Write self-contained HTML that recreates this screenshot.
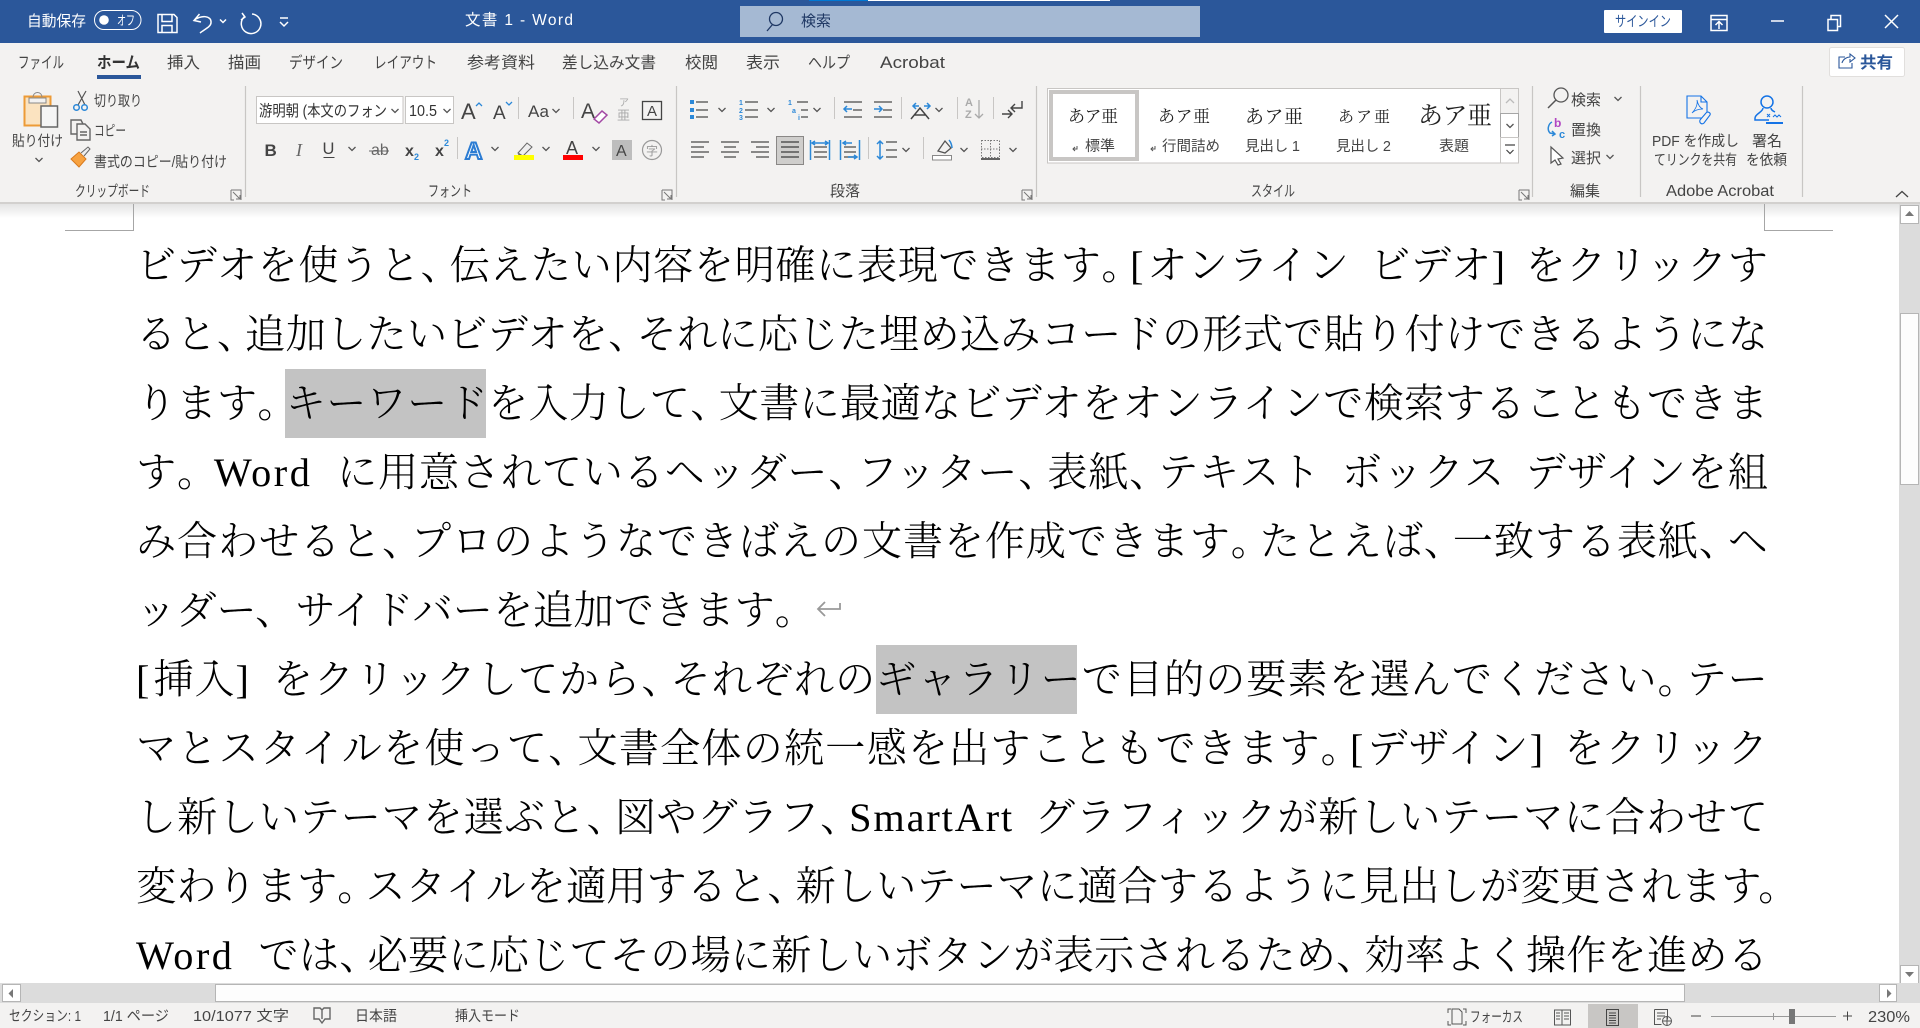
<!DOCTYPE html>
<html lang="ja"><head><meta charset="utf-8"><title>文書 1 - Word</title>
<style>
html,body{margin:0;padding:0;width:1920px;height:1028px;overflow:hidden;background:#fff}
#d{position:absolute;left:0;top:0;width:1920px;height:983px;overflow:hidden;background:#fff}
.l{position:absolute;left:136px;width:1632px;height:69px;line-height:69px;font-size:40.25px;font-weight:300;color:#000;font-family:"Liberation Serif","Noto Serif CJK JP",serif;text-align:justify;text-align-last:justify;white-space:nowrap}
.p{letter-spacing:-12px}
.q{letter-spacing:-4px}
.s{display:inline-block;width:20px}
.t{display:inline-block;width:24px}
.wd{letter-spacing:2.5px}
.sa{letter-spacing:1.9px}
.br{letter-spacing:3px}
.h{position:absolute;background:#c3c3c3;height:69px}
svg{position:absolute;left:0;top:0}
svg text{font-family:"Liberation Sans","Noto Sans CJK JP",sans-serif;fill:#444;font-size:14px}
.k{stroke:#666;fill:none;stroke-width:1.4}
.w{stroke:#fff;fill:none;stroke-width:1.5}
.b{stroke:#2b88d8;fill:none;stroke-width:1.5}
</style></head><body>
<div id="d">
<div class="h" style="left:285px;top:369px;width:201px"></div>
<div class="h" style="left:876px;top:645px;width:201px"></div>
<div class="l" style="top:231px">ビデオを使うと<span class="p">、</span>伝えたい内容を明確に表現できます<span class="p">。</span><span class="br">[</span>オンライン<span class="s"></span>ビデオ]<span class="s"></span>をクリックす</div>
<div class="l" style="top:300px">ると<span class="p">、</span>追加したいビデオを<span class="p">、</span>それに応じた埋め込みコードの形式で貼り付けできるようにな</div>
<div class="l" style="top:369px">ります<span class="p">。</span>キーワードを入力して<span class="p">、</span>文書に最適なビデオをオンラインで検索することもできま</div>
<div class="l" style="top:438px">す<span class="q">。</span><span class="wd">Word</span><span class="t"></span>に用意されているヘッダー<span class="p">、</span>フッター<span class="p">、</span>表紙<span class="p">、</span>テキスト<span class="s"></span>ボックス<span class="s"></span>デザインを組</div>
<div class="l" style="top:507px">み合わせると<span class="p">、</span>プロのようなできばえの文書を作成できます<span class="p">。</span>たとえば<span class="p">、</span>一致する表紙<span class="p">、</span>ヘ</div>
<div class="l" style="top:576px;text-align:left;text-align-last:left">ッダー、サイドバーを追加できます<span class="p">。</span></div>
<div class="l" style="top:645px"><span class="br">[</span>挿入<span class="br">]</span><span class="s"></span>をクリックしてから<span class="p">、</span>それぞれのギャラリーで目的の要素を選んでください<span class="p">。</span>テー</div>
<div class="l" style="top:714px">マとスタイルを使って<span class="p">、</span>文書全体の統一感を出すこともできます<span class="p">。</span><span class="br">[</span>デザイン]<span class="s"></span>をクリック</div>
<div class="l" style="top:783px">し新しいテーマを選ぶと<span class="p">、</span>図やグラフ<span class="p">、</span><span class="sa">SmartArt</span><span class="s"></span>グラフィックが新しいテーマに合わせて</div>
<div class="l" style="top:852px;width:1644px">変わります<span class="p">。</span>スタイルを適用すると<span class="p">、</span>新しいテーマに適合するように見出しが変更されます。</div>
<div class="l" style="top:921px"><span class="wd">Word</span><span class="t"></span>では<span class="p">、</span>必要に応じてその場に新しいボタンが表示されるため<span class="p">、</span>効率よく操作を進める</div>
</div>
<svg width="1920" height="1028" viewBox="0 0 1920 1028">
<defs>
<path id="c" d="M-3.5-2L0 1.5L3.5-2" fill="none" stroke="#555" stroke-width="1.3"/>
<path id="dl" d="M0 0h10v10M2 2l7 7M5 9h4V5M0 0v10h3" fill="none" stroke="#777" stroke-width="1"/>
<linearGradient id="sh" x1="0" y1="0" x2="0" y2="1"><stop offset="0" stop-color="#e4e4e4"/><stop offset="1" stop-color="#fff"/></linearGradient>
</defs>
<!-- title bar -->
<rect width="1920" height="43" fill="#2b579a"/>
<rect x="809" y="0" width="59" height="1" fill="#0078d4"/><rect x="868" y="0" width="242" height="1" fill="#fff"/>
<rect x="740" y="6" width="460" height="31" fill="#a5b9d3"/>
<g style="fill:#fff">
<text x="27" y="26" textLength="59" lengthAdjust="spacingAndGlyphs" style="fill:#fff;font-size:15px">自動保存</text>
<rect x="94.500" y="10.500" width="46.500" height="19" rx="9.500" fill="none" stroke="#fff"/><circle cx="104" cy="20" r="4.800" fill="#fff"/>
<text x="117" y="25" textLength="18" lengthAdjust="spacingAndGlyphs" style="fill:#fff;font-size:13px">オフ</text>
<path class="w" d="M158 14.500h16l3 3v15h-19zM162 14.500v7h10v-7M162 32.500v-7h10v7"/>
<path class="w" d="M199.500 14L194 20.500l7 1.500M194 20.500C200 15 212 15 211 23C210.500 27 205 29 200 33"/>
<path d="M220 19.500l3 3 3-3" class="w" stroke-width="1"/>
<path class="w" d="M252 14A9.800 9.800 0 1 1 244 17M242 13l3 4-4 3"/>
<path d="M280 18h8M280 22l4 4 4-4" class="w" stroke-width="1.100"/>
<text x="465" y="25" textLength="108" lengthAdjust="spacing" style="fill:#fff;font-size:15.500px">文書 1 - Word</text>
<path d="M767 31l5.500-6.500" stroke="#1f3864" stroke-width="1.300" fill="none"/><circle cx="776" cy="19" r="6.500" fill="none" stroke="#1f3864" stroke-width="1.300"/>
<text x="801" y="26" textLength="30" lengthAdjust="spacingAndGlyphs" style="fill:#1f3864;font-size:15px">検索</text>
<rect x="1604" y="10" width="78" height="23" rx="1" fill="#fff"/>
<text x="1615" y="26.500" textLength="56" lengthAdjust="spacingAndGlyphs" style="fill:#2b579a;font-size:14.500px">サインイン</text>
<path class="w" stroke-width="1.300" d="M1711 15.500h16v15h-16zM1711 19.500h16M1719 29v-7M1715.500 25l3.500-3.500 3.500 3.500"/>
<path class="w" stroke-width="1.300" d="M1771 21h13"/>
<path class="w" stroke-width="1.200" d="M1828 19.500h9.500v11h-9.500zM1831 19v-3.500h9.500v11h-3"/>
<path class="w" stroke-width="1.300" d="M1885 15l13 13M1898 15l-13 13"/>
</g>
<!-- ribbon -->
<rect y="43" width="1920" height="159" fill="#f3f2f1"/>
<rect y="202" width="1920" height="2" fill="#d2d0ce"/>
<rect y="204" width="1899" height="14" fill="url(#sh)"/>
<g>
<text x="18" y="68" textLength="46" lengthAdjust="spacingAndGlyphs" style="font-size:16px">ファイル</text>
<text x="97" y="68" textLength="43" lengthAdjust="spacingAndGlyphs" style="font-size:16px;font-weight:700;fill:#333">ホーム</text>
<rect x="97" y="75" width="44" height="4" fill="#2b579a"/>
<text x="167" y="68" textLength="33" lengthAdjust="spacingAndGlyphs" style="font-size:16px">挿入</text>
<text x="228" y="68" textLength="33" lengthAdjust="spacingAndGlyphs" style="font-size:16px">描画</text>
<text x="289" y="68" textLength="54" lengthAdjust="spacingAndGlyphs" style="font-size:16px">デザイン</text>
<text x="374" y="68" textLength="63" lengthAdjust="spacingAndGlyphs" style="font-size:16px">レイアウト</text>
<text x="467" y="68" textLength="68" lengthAdjust="spacingAndGlyphs" style="font-size:16px">参考資料</text>
<text x="562" y="68" textLength="94" lengthAdjust="spacingAndGlyphs" style="font-size:16px">差し込み文書</text>
<text x="685" y="68" textLength="33" lengthAdjust="spacingAndGlyphs" style="font-size:16px">校閲</text>
<text x="746" y="68" textLength="34" lengthAdjust="spacingAndGlyphs" style="font-size:16px">表示</text>
<text x="808" y="68" textLength="42" lengthAdjust="spacingAndGlyphs" style="font-size:16px">ヘルプ</text>
<text x="880" y="68" textLength="65" lengthAdjust="spacingAndGlyphs" style="font-size:17px">Acrobat</text>
</g>
<rect x="1829.500" y="47.500" width="75" height="29" rx="2" fill="#fff" stroke="#e1dfdd"/>
<path d="M1845 57h-6v11h13v-5M1842 63c1-4 5-6 8-6v-3l5 4-5 4v-3" fill="none" stroke="#2b579a" stroke-width="1.100"/>
<text x="1860" y="68" textLength="33" lengthAdjust="spacingAndGlyphs" style="font-size:16px;font-weight:700;fill:#2b579a">共有</text>
<path stroke="#c8c6c4" stroke-width="1.200" d="M245.500 86v111M676.500 86v111M1036.500 86v111M1532.500 86v111M1640.500 86v111M1802.500 86v111"/>
<g>
<text x="75" y="196" textLength="75" lengthAdjust="spacingAndGlyphs" style="font-size:15px">クリップボード</text>
<text x="428" y="196" textLength="44" lengthAdjust="spacingAndGlyphs" style="font-size:15px">フォント</text>
<text x="830" y="196" textLength="30" lengthAdjust="spacingAndGlyphs" style="font-size:15px">段落</text>
<text x="1251" y="196" textLength="44" lengthAdjust="spacingAndGlyphs" style="font-size:15px">スタイル</text>
<text x="1570" y="196" textLength="30" lengthAdjust="spacingAndGlyphs" style="font-size:15px">編集</text>
<text x="1666" y="196" textLength="108" lengthAdjust="spacingAndGlyphs" style="font-size:15.500px">Adobe Acrobat</text>
</g>
<use href="#dl" x="231" y="190"/><use href="#dl" x="662" y="190"/><use href="#dl" x="1022" y="190"/><use href="#dl" x="1519" y="190"/>
<path d="M1896 197l6-5.500 6 5.500" fill="none" stroke="#444" stroke-width="1.300"/>
<!-- clipboard -->
<path d="M24.500 96.500h26v29h-26z" fill="#fbe3c0" stroke="#ed9b36" stroke-width="2"/>
<rect x="29" y="98" width="17" height="5" fill="#f3f2f1" stroke="#888"/><path d="M33 97a4.500 4.500 0 0 1 9 0" fill="none" stroke="#888"/>
<rect x="41" y="106" width="16.500" height="21" fill="#f5f5f5" stroke="#666" stroke-width="1.500"/>
<text x="12" y="146" textLength="51" lengthAdjust="spacingAndGlyphs" style="font-size:14.500px">貼り付け</text>
<use href="#c" x="39" y="160"/>
<path d="M78 91l7 14M86 91l-8 14" stroke="#555" fill="none" stroke-width="1.200"/><circle cx="76.500" cy="107.500" r="2.800" fill="none" stroke="#2b88d8" stroke-width="1.500"/><circle cx="84.500" cy="107.500" r="2.800" fill="none" stroke="#2b88d8" stroke-width="1.500"/>
<text x="94" y="106" textLength="48" lengthAdjust="spacingAndGlyphs" style="font-size:14.500px">切り取り</text>
<path class="k" d="M77 134h-6v-14h10l2 4M77 124h8l5 5v11H77zM80 132h7M80 135h7"/>
<text x="94" y="136" textLength="32" lengthAdjust="spacingAndGlyphs" style="font-size:14.500px">コピー</text>
<path d="M71 159l8-7 7 7-7 8z" fill="#f7a240" stroke="#d97a1d"/><path d="M81 153l7-6 2 2-6 7" fill="#eee" stroke="#666"/>
<text x="94" y="167" textLength="133" lengthAdjust="spacingAndGlyphs" style="font-size:14.500px">書式のコピー/貼り付け</text>
<!-- font -->
<rect x="256.500" y="96.500" width="146.500" height="27" fill="#fff" stroke="#c8c6c4"/>
<rect x="405.500" y="96.500" width="48" height="27" fill="#fff" stroke="#c8c6c4"/>
<text x="259" y="116" textLength="128" lengthAdjust="spacingAndGlyphs" style="font-size:15.500px;fill:#333">游明朝 (本文のフォン</text>
<text x="409" y="116" textLength="28" lengthAdjust="spacingAndGlyphs" style="font-size:16px;fill:#333">10.5</text>
<use href="#c" x="395" y="111"/><use href="#c" x="447" y="111"/>
<text x="461" y="119" style="font-size:22px;fill:#444">A</text><path d="M476 106l3-3 3 3" stroke="#2b88d8" fill="none" stroke-width="1.300"/>
<text x="493" y="119" style="font-size:19px;fill:#444">A</text><path d="M506 102l3 3 3-3" stroke="#2b88d8" fill="none" stroke-width="1.300"/>
<path stroke="#c8c6c4" d="M518.500 97v22M573.500 97v22M457.500 137v22"/>
<text x="528" y="117" textLength="21" lengthAdjust="spacing" style="font-size:17px">Aa</text><use href="#c" x="556" y="111"/>
<text x="581" y="118" style="font-size:21px;fill:#444">A</text><path d="M594 119l8-8 5 4-8 8z" fill="#fff" stroke="#a349a4" stroke-width="1.500"/>
<text x="619" y="106" style="font-size:10px;fill:#aaa">ア</text><text x="617" y="120" style="font-size:13px;fill:#aaa">亜</text>
<rect x="642.500" y="101.500" width="19" height="18" fill="none" stroke="#444" stroke-width="1.300"/>
<text x="647" y="116" style="font-size:15px">A</text>
<text x="264.500" y="156" style="font-size:17px;font-weight:700">B</text>
<text x="296" y="156" style="font-size:18px;font-style:italic;fill:#666;font-family:'Liberation Serif'">I</text>
<text x="322.500" y="154" style="font-size:16.500px">U</text><path d="M323.500 157.500h11" stroke="#444"/><use href="#c" x="352" y="149"/>
<text x="371" y="155" style="font-size:16px;fill:#666">ab</text><path d="M369 151h20" stroke="#666"/>
<text x="405" y="156" style="font-size:16px;font-weight:700">x</text><text x="414" y="160" style="font-size:9px;fill:#2b88d8;font-weight:700">2</text>
<text x="435" y="156" style="font-size:16px;font-weight:700">x</text><text x="444" y="146" style="font-size:9px;fill:#2b88d8;font-weight:700">2</text>
<text x="465" y="159" style="font-size:24px;font-weight:700;fill:#fff;stroke:#2b7cd3;stroke-width:2">A</text><use href="#c" x="495" y="149"/>
<path d="M518 153l9-10 5 4-9 9z" fill="#eee" stroke="#666"/><path d="M517 157l2-4 4 3z" fill="#666"/><rect x="514" y="155" width="20" height="5" fill="#ff0"/><use href="#c" x="546" y="149"/>
<text x="566" y="154" style="font-size:18px">A</text><rect x="563" y="155" width="20" height="5" fill="#f00"/><use href="#c" x="596" y="149"/>
<rect x="612" y="140" width="20" height="20" fill="#bdbdbd"/><text x="616" y="156" style="font-size:16px">A</text>
<circle cx="652" cy="150" r="9.500" fill="none" stroke="#999" stroke-width="1.200"/><text x="646" y="155" style="font-size:12px;fill:#999">字</text>
<!-- para -->
<path class="k" d="M696 102h12M696 110h12M696 117h12M745 102h13M745 110h13M745 117h13M797 102h11M801 110h7M801 117h7M844 102h18M853 110h9M844 117h18M874 102h18M883 110h9M874 117h18"/>
<path fill="#2b88d8" d="M690 100h4v4h-4zM690 108h4v4h-4zM690 115h4v4h-4z"/>
<text x="739" y="105" style="font-size:7px;fill:#2b88d8;font-weight:700">1</text><text x="739" y="113" style="font-size:7px;fill:#2b88d8;font-weight:700">2</text><text x="739" y="120" style="font-size:7px;fill:#2b88d8;font-weight:700">3</text>
<text x="788" y="105" style="font-size:7px;fill:#2b88d8;font-weight:700">1</text><text x="792" y="113" style="font-size:7px;fill:#2b88d8;font-weight:700">a</text><text x="798" y="120" style="font-size:7px;fill:#2b88d8;font-weight:700">i</text>
<use href="#c" x="722" y="110"/><use href="#c" x="771" y="110"/><use href="#c" x="817" y="110"/><use href="#c" x="939" y="110"/>
<path class="b" d="M852 109h-8m3-3l-3 3 3 3M874 109h8m-3-3l3 3-3 3M913 106h6m-3-3l-3 3 3 3M924 106h6m-3-3l3 3-3 3"/>
<path d="M911 119l9-11 9 11M914 115h12" fill="none" stroke="#444" stroke-width="1.500"/>
<path stroke="#c8c6c4" d="M834.500 97v22M901.500 97v22M957.500 97v22M993.500 97v22M868.500 137v22M923.500 137v22"/>
<text x="965" y="106" style="font-size:11px;fill:#aaa;font-weight:700">A</text><text x="965" y="118" style="font-size:11px;fill:#aaa;font-weight:700">Z</text>
<path d="M979 100v18M975 114l4 4 4-4" fill="none" stroke="#aaa" stroke-width="1.300"/>
<path d="M1002 114h10M1008 110l4 4-4 4M1022 101v7h-11M1015 104l-4 4 4 4" fill="none" stroke="#444" stroke-width="1.400"/>
<path class="k" d="M691 142h18M691 147h13M691 152h18M691 157h13M721 142h18M724 147h12M721 152h18M724 157h12M751 142h18M756 147h13M751 152h18M756 157h13"/>
<rect x="776.500" y="136.500" width="27" height="28" fill="#cfcecc" stroke="#8a8886"/>
<path d="M781 142h18M781 147h18M781 152h18M781 157h18" stroke="#555" stroke-width="1.500"/>
<path class="k" d="M814 147h13M814 152h13M814 157h13M844 147h12M844 152h12M844 157h12"/>
<path class="b" d="M810.500 140v20M829.500 140v20M812 143h16m-3-2l3 2-3 2M815 141l-3 2 3 2M840.500 140v20M859.500 140v20M852 143h-9m3-2l-3 2 3 2M848 157h9m-3-2l3 2-3 2"/>
<path class="b" d="M880 141v18m-3-15l3-3 3 3M877 156l3 3 3-3"/>
<path class="k" d="M886 142h11M886 150h11M886 157h11"/>
<use href="#c" x="906" y="150"/>
<path d="M938 151l7-10 6 7-6 5z" fill="none" stroke="#555" stroke-width="1.300"/><path d="M949 140c2 2 3 6 3 8" stroke="#2b88d8" fill="none" stroke-width="1.500"/>
<rect x="932.500" y="155.500" width="19" height="4.500" fill="#fff" stroke="#888"/><use href="#c" x="964" y="150"/>
<rect x="981.500" y="140.500" width="18" height="17" fill="none" stroke="#777" stroke-dasharray="1.500 1.500"/><path d="M990.500 140v18M981 149h19" stroke="#777" stroke-dasharray="1.500 1.500"/><path d="M981 159h19" stroke="#333" stroke-width="1.500"/>
<use href="#c" x="1013" y="150"/>
<!-- styles -->
<rect x="1047.500" y="88.500" width="471" height="74.500" fill="#fff" stroke="#c8c6c4"/>
<rect x="1051" y="92" width="86" height="67" fill="none" stroke="#c8c6c4" stroke-width="4"/>
<rect x="1500.500" y="88.500" width="18" height="25" fill="#f3f2f1" stroke="#c8c6c4"/>
<rect x="1500.500" y="113.500" width="18" height="24" fill="#fff" stroke="#a6a6a6"/>
<rect x="1500.500" y="137.500" width="18" height="25.500" fill="#fff" stroke="#c8c6c4"/>
<path d="M1506 103l4-4 4 4" fill="none" stroke="#bbb" stroke-width="1.300"/>
<use href="#c" x="1510" y="126"/>
<path d="M1505 145h10M1506.500 150l3.500 3.500 3.500-3.500" fill="none" stroke="#444" stroke-width="1.200"/>
<g>
<text x="1068" y="122" textLength="50" lengthAdjust="spacing" style="font-size:17px;fill:#222;font-family:'Noto Serif CJK JP',serif">あア亜</text>
<text x="1158" y="122" textLength="52" lengthAdjust="spacing" style="font-size:17px;fill:#222;font-family:'Noto Serif CJK JP',serif">あア亜</text>
<text x="1245" y="123" textLength="58" lengthAdjust="spacing" style="font-size:19px;fill:#222;font-family:'Noto Serif CJK JP',serif">あア亜</text>
<text x="1338" y="122" textLength="52" lengthAdjust="spacing" style="font-size:16px;fill:#222;font-family:'Noto Serif CJK JP',serif">あア亜</text>
<text x="1418" y="124" textLength="74" lengthAdjust="spacing" style="font-size:25px;fill:#222;font-family:'Noto Serif CJK JP',serif">あア亜</text>
</g>
<path d="M1077 146v3h-4m2-2l-2 2 2 2M1155 146v3h-4m2-2l-2 2 2 2" fill="none" stroke="#555"/>
<text x="1085" y="151" textLength="30" lengthAdjust="spacingAndGlyphs" style="font-size:14.500px">標準</text>
<text x="1162" y="151" textLength="58" lengthAdjust="spacingAndGlyphs" style="font-size:14.500px">行間詰め</text>
<text x="1245" y="151" textLength="55" lengthAdjust="spacing" style="font-size:14.500px">見出し 1</text>
<text x="1336" y="151" textLength="55" lengthAdjust="spacing" style="font-size:14.500px">見出し 2</text>
<text x="1439" y="151" textLength="30" lengthAdjust="spacingAndGlyphs" style="font-size:14.500px">表題</text>
<!-- editing -->
<circle cx="1561" cy="95" r="7" fill="none" stroke="#555" stroke-width="1.300"/><path d="M1548 108l8-8" stroke="#555" stroke-width="1.500"/>
<text x="1571" y="105" textLength="30" lengthAdjust="spacingAndGlyphs" style="font-size:15px">検索</text><use href="#c" x="1618" y="99"/>
<text x="1554" y="127" style="font-size:12px;fill:#b146c2;font-weight:700">b</text><text x="1559" y="138" style="font-size:11px;fill:#2b88d8;font-weight:700">c</text>
<path class="b" d="M1552 122c-4 2-5 8-2 11l5 1m-3-3l3 3-3 2"/>
<text x="1571" y="135" textLength="30" lengthAdjust="spacingAndGlyphs" style="font-size:15px">置換</text>
<path d="M1551 147l0 16 4-3 3 5 3-1-3-5 5-1z" fill="#fff" stroke="#555" stroke-width="1.200"/>
<text x="1571" y="163" textLength="30" lengthAdjust="spacingAndGlyphs" style="font-size:15px">選択</text><use href="#c" x="1610" y="157"/>
<!-- acrobat -->
<path d="M1687 96h14l6 6v16h-20zM1701 96v6h6" fill="none" stroke="#1473e6" stroke-width="1.100"/><path d="M1692 113c3-3 6-8 5-13 1 5 3 8 6 9-4 0-8 1-11 4z" fill="none" stroke="#1473e6" stroke-width=".8"/>
<path d="M1700 120l6-7c2-2 5 0 4 2l-6 8c-2 2-5 0-4-3z" fill="#f3f2f1" stroke="#1473e6" stroke-width="1.100"/>
<circle cx="1767" cy="102" r="6" fill="none" stroke="#1473e6" stroke-width="1.500"/>
<path d="M1763 108c0 4-8 6-8 10v2h14M1771 108c0 2 2 3 4 4" fill="none" stroke="#1473e6" stroke-width="1.500"/>
<path d="M1766 122h17v2h-17z" fill="#1473e6"/><path d="M1767 114l3 3M1770 114l-3 3M1773 117l2-2 2 2 2-2 2 2" stroke="#1473e6" fill="none"/>
<text x="1652" y="146" textLength="87" lengthAdjust="spacingAndGlyphs" style="font-size:14.500px">PDF を作成し</text>
<text x="1654" y="165" textLength="83" lengthAdjust="spacingAndGlyphs" style="font-size:14.500px">てリンクを共有</text>
<text x="1752" y="146" textLength="30" lengthAdjust="spacingAndGlyphs" style="font-size:15px">署名</text>
<text x="1746" y="165" textLength="41" lengthAdjust="spacingAndGlyphs" style="font-size:14.500px">を依頼</text>
<!-- crop marks -->
<path d="M65 230.500h68.500V204M1833 230.500h-68.500V204" fill="none" stroke="#a6a6a6"/>
<!-- return mark -->
<path d="M840 603v6h-22m7-7l-7 7 7 7" fill="none" stroke="#999" stroke-width="1.800"/>
<!-- v scrollbar -->
<rect x="1899" y="204" width="21" height="779" fill="#dcdcdc"/>
<rect x="1900.500" y="205.500" width="18" height="18" fill="#fff" stroke="#b5b5b5"/>
<path d="M1905 216h9l-4.500-5z" fill="#777"/>
<rect x="1900.500" y="313.500" width="18" height="171" fill="#fdfdfd" stroke="#b5b5b5"/>
<rect x="1900.500" y="965.500" width="18" height="18" fill="#fff" stroke="#b5b5b5"/>
<path d="M1905 972h9l-4.500 5z" fill="#777"/>
<!-- h scrollbar -->
<rect x="0" y="983" width="1920" height="20" fill="#dcdcdc"/>
<rect x="2.500" y="984.500" width="18" height="17" fill="#fff" stroke="#b5b5b5"/>
<path d="M13 989v9l-4.500-4.500z" fill="#777"/>
<rect x="215.500" y="984.500" width="1469" height="17" fill="#fdfdfd" stroke="#b5b5b5"/>
<rect x="1879.500" y="984.500" width="17" height="17" fill="#fff" stroke="#b5b5b5"/>
<path d="M1887 989v9l4.500-4.500z" fill="#777"/>
<!-- status -->
<rect y="1003" width="1920" height="25" fill="#f3f2f1"/>
<rect x="1588" y="1004" width="50" height="24" fill="#c8c6c4"/>
<text x="9" y="1021" textLength="72" lengthAdjust="spacingAndGlyphs" style="font-size:14.500px">セクション: 1</text>
<text x="103" y="1021" textLength="66" lengthAdjust="spacingAndGlyphs" style="font-size:14.500px">1/1 ページ</text>
<text x="193" y="1021" textLength="96" lengthAdjust="spacingAndGlyphs" style="font-size:14.500px">10/1077 文字</text>
<path class="k" d="M314 1008h6l2 2 2-2h6v11h-5l-3 4-3-4h-5zM322 1010v9" stroke-width="1.200"/>
<text x="355" y="1021" textLength="42" lengthAdjust="spacingAndGlyphs" style="font-size:14.500px">日本語</text>
<text x="455" y="1021" textLength="65" lengthAdjust="spacingAndGlyphs" style="font-size:14.500px">挿入モード</text>
<path d="M1451 1009h-3v4M1463 1009h3v4M1451 1025h-3v-4M1463 1025h3v-4" fill="none" stroke="#555"/><path d="M1452 1009h7l3 3v12h-10z" fill="none" stroke="#555"/>
<text x="1470" y="1022" textLength="53" lengthAdjust="spacingAndGlyphs" style="font-size:14.500px">フォーカス</text>
<path d="M1554.500 1010h7.500v15h-7.500zM1562 1010h8.500v15H1562zM1556 1013h4M1556 1016h4M1556 1019h4M1564 1013h5M1564 1016h5M1564 1019h5" fill="none" stroke="#555"/>
<path d="M1606.500 1009.500h12v16h-12zM1609 1013h7M1609 1015.500h7M1609 1018h7M1609 1020.500h7M1609 1023h7" fill="none" stroke="#444"/>
<path d="M1654.500 1009.500h13v10M1654.500 1009.500v15h7M1657 1013h8M1657 1016h8M1657 1019h4" fill="none" stroke="#555"/><circle cx="1667" cy="1021" r="4.500" fill="none" stroke="#555"/><path d="M1662.500 1021h9M1667 1016.500v9" stroke="#555"/>
<path d="M1711 1016.500h125M1773.500 1013v7" stroke="#999" fill="none"/>
<path d="M1691 1016h10M1843 1016h9M1847.500 1011.500v9" stroke="#444" fill="none"/>
<rect x="1789" y="1009" width="6" height="15" fill="#777"/>
<text x="1868" y="1022" textLength="42" lengthAdjust="spacingAndGlyphs" style="font-size:15.500px">230%</text>
</svg>
</body></html>
